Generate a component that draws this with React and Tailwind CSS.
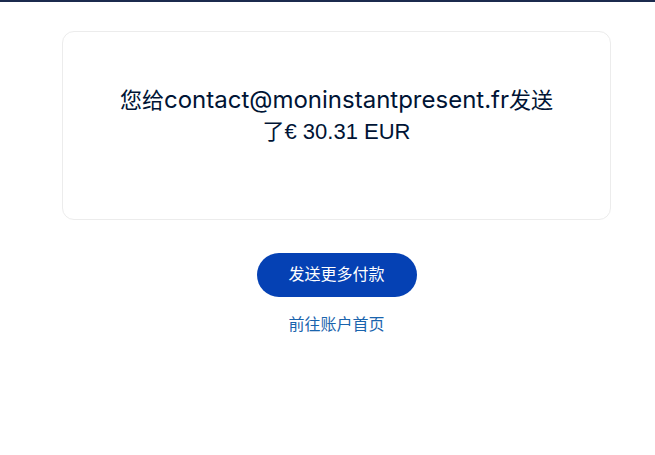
export default function App() {
  return (
    <div className="min-h-[455px] w-full bg-white" style={{ fontFamily: '"Liberation Sans", "Noto Sans CJK SC", sans-serif' }}>
      <div className="h-[2px] w-full bg-[#1b2a4e]" />
      <div className="ml-[62px] w-[549px] pt-[29px]">
        <div className="flex h-[189px] w-full flex-col items-center rounded-[12px] border border-[#ececec] pt-[52px]">
          <p className="text-center text-[22px] leading-[31px] text-[#001435]">
            您给<span className="font-['Inter',sans-serif] text-[24px]">contact@moninstantpresent.fr</span>发送
            <br />了€ 30.31 EUR
          </p>
        </div>
        <div className="flex flex-col items-center pt-[33px]">
          <button className="h-[44px] w-[160px] rounded-full bg-[#0541b4] text-[16px] text-white">
            发送更多付款
          </button>
          <a className="mt-[18px] text-[16px] leading-[20px] text-[#1a64ad]">前往账户首页</a>
        </div>
      </div>
    </div>
  );
}
